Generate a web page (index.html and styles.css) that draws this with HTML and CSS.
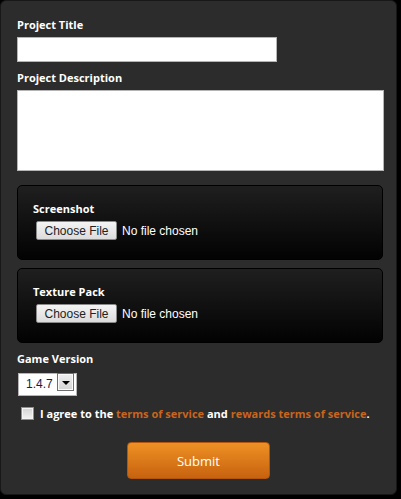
FILE: index.html
```html
<!DOCTYPE html>
<html lang="en">
<head>
    <meta charset="UTF-8">
    <title>Submit Project</title>
    <link rel="stylesheet" href="styles.css">
</head>
<body>
    <form class="panel">
        <label class="field-label" for="title">Project Title</label>
        <input class="text-input" type="text" id="title">

        <label class="field-label" for="desc">Project Description</label>
        <textarea class="text-area" id="desc"></textarea>

        <div class="upload-box">
            <label class="field-label">Screenshot</label>
            <input class="file-input" type="file">
        </div>

        <div class="upload-box">
            <label class="field-label">Texture Pack</label>
            <input class="file-input" type="file">
        </div>

        <label class="field-label version-label" for="version">Game Version</label>
        <div class="select-wrap">
            <select class="version-select" id="version">
                <option>1.4.7</option>
            </select>
            <span class="select-arrow"></span>
        </div>

        <div class="agree-row">
            <input class="agree-box" type="checkbox" id="agree">
            <label for="agree">I agree to the <a href="#">terms of service</a> and <a href="#">rewards terms of service</a>.</label>
        </div>

        <div class="submit-row">
            <button class="submit-button" type="button">Submit</button>
        </div>
    </form>
</body>
</html>
```
FILE: styles.css
```css
body {
    margin: 0;
    background-color: #000;
    font-family: 'Open Sans', 'Noto Sans', sans-serif;
    color: #fff;
}
.panel {
    width: 397px;
    height: 495px;
    box-sizing: border-box;
    background-color: #2c2c2c;
    border: 1px solid #181818;
    border-radius: 6px;
    padding: 16px 16px;
}
.field-label {
    display: block;
    font-size: 11px;
    font-weight: 700;
    line-height: 16px;
    margin-bottom: 4px;
}
.text-input {
    display: block;
    width: 260px;
    height: 25px;
    box-sizing: border-box;
    border: 1px solid #b5b5b5;
    margin: 0 0 8px 0;
    padding: 2px 4px;
}
.text-area {
    display: block;
    width: 367px;
    height: 81px;
    box-sizing: border-box;
    border: 1px solid #b5b5b5;
    margin: 0;
    resize: none;
}
.upload-box {
    width: 366px;
    height: 75px;
    box-sizing: border-box;
    margin-top: 14px;
    padding: 15px 15px 0 15px;
    border: 1px solid #000;
    border-radius: 5px;
    background: linear-gradient(#1f1f1f, #020202);
}
.upload-box + .upload-box {
    margin-top: 8px;
}
.file-input {
    display: block;
    margin-left: 3px;
    color: #fff;
    font-family: 'Liberation Sans', Arial, sans-serif;
    font-size: 12px;
}
.file-input::file-selector-button {
    height: 19px;
    width: 81px;
    margin-right: 5px;
    padding: 0;
    font-family: 'Liberation Sans', Arial, sans-serif;
    font-size: 12px;
    color: #222;
    background: linear-gradient(#f4f4f4, #dcdcdc);
    border: 1px solid #8a8a8a;
    border-radius: 2px;
}
.version-label {
    margin-top: 8px;
}
.select-wrap {
    position: relative;
    width: 59px;
    height: 23px;
    margin-left: 1px;
}
.version-select {
    appearance: none;
    width: 59px;
    height: 23px;
    box-sizing: border-box;
    border: 1px solid #b5b5b5;
    background: #fff;
    padding: 0 0 0 7px;
    font-family: 'Liberation Sans', Arial, sans-serif;
    font-size: 12px;
    color: #1a1a4a;
}
.select-arrow {
    position: absolute;
    right: 3px;
    top: 2px;
    width: 15px;
    height: 16px;
    border: 1px solid #6e6e6e;
    box-shadow: inset 0 0 0 1px #fafafa;
    background: linear-gradient(#f0f0f0, #d4d4d4);
    pointer-events: none;
}
.select-arrow::after {
    content: "";
    position: absolute;
    left: 4px;
    top: 7px;
    border-left: 4px solid transparent;
    border-right: 4px solid transparent;
    border-top: 4px solid #000;
}
.agree-row {
    display: flex;
    align-items: center;
    height: 16px;
    margin-top: 11px;
    margin-left: 4px;
    font-size: 11px;
    font-weight: 700;
    white-space: nowrap;
}
.agree-box {
    appearance: none;
    width: 13px;
    height: 13px;
    margin: 0 6px 0 0;
    border: 1px solid #8e8e8e;
    box-shadow: inset 0 0 0 1px #f4f4f4;
    background: linear-gradient(#d4d4d4, #f2f2f2);
}
.agree-row a {
    color: #c8651e;
    text-decoration: none;
}
.submit-row {
    display: flex;
    justify-content: center;
    margin-top: 21px;
}
.submit-button {
    width: 143px;
    height: 37px;
    border: 1px solid #b3560c;
    border-radius: 4px;
    background: linear-gradient(#ee9124, #c7620f);
    color: #fff;
    font-family: 'Open Sans', 'Noto Sans', sans-serif;
    font-size: 13px;
}
```
